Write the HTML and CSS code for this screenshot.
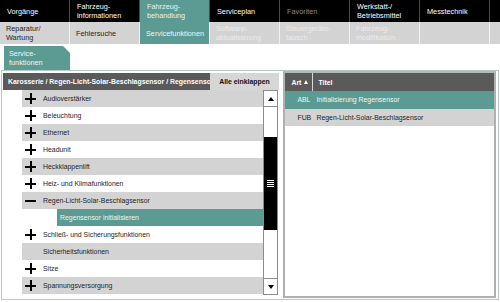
FILE: index.html
```html
<!DOCTYPE html>
<html>
<head>
<meta charset="utf-8">
<link rel="stylesheet" href="styles.css">
</head>
<body>
<div class="nav1">
  <div class="n1">Vorgänge</div>
  <div class="n1">Fahrzeug-<br>informationen</div>
  <div class="n1 act">Fahrzeug-<br>behandlung</div>
  <div class="n1">Serviceplan</div>
  <div class="n1 dis">Favoriten</div>
  <div class="n1">Werkstatt-/<br>Betriebsmittel</div>
  <div class="n1">Messtechnik</div>
  <div class="n1 rest"></div>
</div>
<div class="nav2">
  <div class="n2">Reparatur/<br>Wartung</div>
  <div class="n2">Fehlersuche</div>
  <div class="n2 act">Servicefunktionen</div>
  <div class="n2 dis">Software-<br>aktualisierung</div>
  <div class="n2 dis">Steuergeräte-<br>tausch</div>
  <div class="n2 dis">Fahrzeug-<br>modifikation</div>
  <div class="n2"></div>
  <div class="n2 rest"></div>
</div>
<div class="tabrow">
  <div class="tab">Service-<br>funktionen</div>
</div>
<div class="main">
  <div class="left">
    <div class="lhead">
      <div class="path">Karosserie / Regen-Licht-Solar-Beschlagsensor / Regensensor initialisieren</div>
      <div class="collapse">Alle einklappen</div>
    </div>
    <div class="lbody">
      <div class="tree">
        <div class="row g"><span class="ico plus"></span>Audioverstärker</div>
        <div class="row"><span class="ico plus"></span>Beleuchtung</div>
        <div class="row g"><span class="ico plus"></span>Ethernet</div>
        <div class="row"><span class="ico plus"></span>Headunit</div>
        <div class="row g"><span class="ico plus"></span>Heckklappenlift</div>
        <div class="row"><span class="ico plus"></span>Heiz- und Klimafunktionen</div>
        <div class="row g"><span class="ico minus"></span>Regen-Licht-Solar-Beschlagsensor</div>
        <div class="row sub"><span class="subsel">Regensensor initialisieren</span></div>
        <div class="row"><span class="ico plus"></span>Schließ- und Sicherungsfunktionen</div>
        <div class="row g"><span class="ico none"></span>Sicherheitsfunktionen</div>
        <div class="row"><span class="ico plus"></span>Sitze</div>
        <div class="row g"><span class="ico plus"></span>Spannungsversorgung</div>
      </div>
      <div class="sbar">
        <div class="sbtn up"><span class="tri-up"></span></div>
        <div class="track">
          <div class="thumb-pre"></div>
          <div class="thumb"><span class="grip"></span></div>
        </div>
        <div class="sbtn down"><span class="tri-down"></span></div>
      </div>
    </div>
  </div>
  <div class="right">
    <div class="rhead">
      <div class="c1">Art <span class="sort"></span></div>
      <div class="c2">Titel</div>
    </div>
    <div class="rrow sel"><div class="c1">ABL</div><div class="c2">Initialisierung Regensensor</div></div>
    <div class="rrow g"><div class="c1">FUB</div><div class="c2">Regen-Licht-Solar-Beschlagsensor</div></div>
  </div>
</div>
</body>
</html>
```

FILE: styles.css
```css
* { box-sizing: border-box; }
html, body { margin: 0; padding: 0; }
body {
  width: 500px;
  height: 302px;
  overflow: hidden;
  background: #fff;
  font-family: "Liberation Sans", Arial, sans-serif;
  font-size: 7px;
  color: #1a1a1a;
}
.nav1 {
  display: flex;
  height: 22px;
  background: #000;
}
.n1 {
  flex: 0 0 70px;
  height: 22px;
  display: flex;
  align-items: center;
  padding-left: 7px;
  color: #fff;
  font-size: 7.3px;
  line-height: 9px;
  border-right: 1px solid #4a4a4a;
}
.n1.act { background: #5b9b93; color: #e8f2f0; }
.n1.dis { color: #8a8a8a; }
.n1.rest { flex: 1 1 auto; border-right: none; }
.nav2 {
  display: flex;
  height: 22px;
  background: #d3d3d3;
}
.n2 {
  flex: 0 0 70px;
  height: 22px;
  display: flex;
  align-items: center;
  padding-left: 6px;
  color: #1e1e1e;
  font-size: 7.3px;
  line-height: 9px;
  border-right: 1px solid #f2f2f2;
}
.n2.act { background: #5b9b93; color: #eef6f4; }
.n2.dis { color: #ececec; }
.n2.rest { flex: 1 1 auto; border-right: none; }
.tabrow {
  height: 26px;
  padding: 2px 0 0 4px;
}
.tab {
  width: 66px;
  height: 24px;
  background: #5b9b93;
  color: #eef6f4;
  font-size: 7.3px;
  line-height: 9px;
  padding: 3px 0 0 5px;
  clip-path: polygon(0 0, 59px 0, 66px 7px, 66px 100%, 0 100%);
}
.main {
  margin: 0 1px 0 1px;
  height: 230px;
  border: 1px solid #b4cbc8;
  display: flex;
  padding: 0 2px 0 1px;
}
.left {
  width: 279px;
  padding-top: 2px;
}
.lhead {
  display: flex;
  height: 17px;
}
.path {
  width: 207px;
  background: #5a5a5a;
  color: #fff;
  font-weight: bold;
  font-size: 6.9px;
  line-height: 17px;
  padding-left: 5px;
  white-space: nowrap;
  overflow: hidden;
}
.collapse {
  width: 69px;
  background: #d6d6d6;
  color: #111;
  font-weight: bold;
  font-size: 6.9px;
  line-height: 17px;
  text-align: center;
}
.lbody {
  display: flex;
  padding-left: 19px;
}
.tree {
  width: 241px;
}
.row {
  height: 17px;
  display: flex;
  align-items: center;
  background: #fff;
  font-size: 6.9px;
  color: #1e1e1e;
}
.row.g { background: #d3d3d3; }
.ico {
  position: relative;
  width: 11px;
  height: 11px;
  margin: 0 7px 0 3px;
  flex: 0 0 11px;
}
.ico.plus::before, .ico.plus::after, .ico.minus::before {
  content: "";
  position: absolute;
  background: #000;
}
.ico.plus::before, .ico.minus::before {
  left: 0; top: 4.5px; width: 11px; height: 2px;
}
.ico.plus::after {
  left: 4.5px; top: 0; width: 2px; height: 11px;
}
.row.sub {
  padding-left: 35px;
}
.subsel {
  display: flex;
  align-items: center;
  width: 100%;
  height: 17px;
  background: #5b9b93;
  color: #eef6f4;
  padding-left: 3px;
}
.sbar {
  width: 15px;
  height: 205px;
  border: 1px solid #8c8c8c;
  display: flex;
  flex-direction: column;
  background: #fff;
}
.sbtn {
  height: 16px;
  display: flex;
  align-items: center;
  justify-content: center;
  background: #fff;
}
.sbtn.up { border-bottom: 1px solid #8c8c8c; }
.sbtn.down { border-top: 1px solid #8c8c8c; }
.tri-up {
  width: 0; height: 0;
  border-left: 3.5px solid transparent;
  border-right: 3.5px solid transparent;
  border-bottom: 4px solid #000;
}
.tri-down {
  width: 0; height: 0;
  border-left: 3.5px solid transparent;
  border-right: 3.5px solid transparent;
  border-top: 4px solid #000;
}
.track {
  flex: 1 1 auto;
  display: flex;
  flex-direction: column;
}
.thumb-pre { height: 30px; }
.thumb {
  height: 93px;
  background: #000;
  display: flex;
  align-items: center;
  justify-content: center;
}
.grip {
  width: 7px;
  height: 7px;
  background: repeating-linear-gradient(to bottom, #fff 0, #fff 1px, transparent 1px, transparent 2px);
}
.right {
  margin-left: 2px;
  width: 213px;
  height: 227px;
  border: 2px solid #b0b0b0;
  border-top: 2px solid #b8b8b8;
}
.rhead {
  display: flex;
  height: 18px;
  background: #5a5a5a;
  color: #fff;
  font-weight: bold;
  font-size: 6.9px;
  align-items: stretch;
}
.rhead .c1 {
  width: 28px;
  border-right: 1px solid #d8d8d8;
  display: flex;
  align-items: center;
  padding-left: 6px;
}
.rhead .c2 {
  display: flex;
  align-items: center;
  padding-left: 5px;
}
.sort {
  display: inline-block;
  width: 0; height: 0;
  margin-left: 3px;
  border-left: 2.5px solid transparent;
  border-right: 2.5px solid transparent;
  border-bottom: 4px solid #fff;
}
.rrow {
  display: flex;
  height: 17.5px;
  align-items: center;
  font-size: 6.9px;
}
.rrow.sel { background: #5b9b93; color: #eef6f4; }
.rrow.g { background: #d3d3d3; color: #1e1e1e; }
.rrow .c1 { width: 31px; padding-left: 12px; }
.rrow .c2 { padding-left: 0; }
```
